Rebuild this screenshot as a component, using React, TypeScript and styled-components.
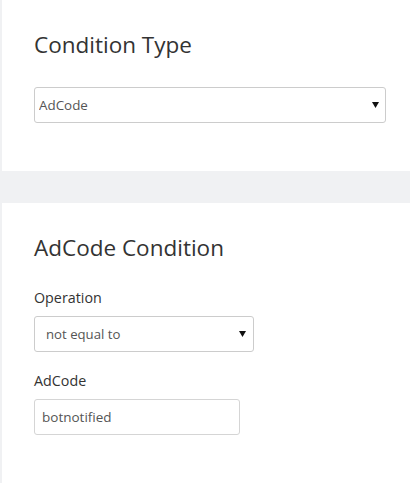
import React from "react";
import styled, { createGlobalStyle } from "styled-components";

const Global = createGlobalStyle`
  html, body { margin: 0; padding: 0; }
  body {
    background: #f0f1f3;
    font-family: "Open Sans", "Liberation Sans", sans-serif;
    color: #333;
  }
  * { box-sizing: border-box; }
`;

const Page = styled.div`
  display: flex;
  flex-direction: column;
  gap: 32px;
  padding-left: 2px;
  min-height: 483px;
`;

const Panel = styled.section<{ $grow?: boolean }>`
  background: #fff;
  padding: 30px 22px 48px 32px;
  display: flex;
  flex-direction: column;
  align-items: flex-start;
  flex: ${(p) => (p.$grow ? "1" : "none")};
`;

const Heading = styled.h2<{ $gap?: number }>`
  margin: 0 0 ${(p) => p.$gap ?? 27}px;
  font-size: 22.5px;
  line-height: 30px;
  font-weight: 400;
  color: #333;
`;

const Field = styled.div<{ $gap?: number }>`
  display: flex;
  flex-direction: column;
  gap: 8px;
  margin-top: ${(p) => p.$gap ?? 0}px;
`;

const Label = styled.label`
  font-size: 14.3px;
  line-height: 20px;
  color: #333;
`;

const SelectWrap = styled.div<{ $width: number }>`
  position: relative;
  width: ${(p) => p.$width}px;
  height: 36px;
`;

const Select = styled.select<{ $pad: number; $size: number }>`
  appearance: none;
  -webkit-appearance: none;
  width: 100%;
  height: 36px;
  margin: 0;
  border: 1px solid #cccccc;
  border-radius: 3px;
  background: #fff;
  padding: 0 24px 0 ${(p) => p.$pad}px;
  font-family: "Open Sans", "Liberation Sans", sans-serif;
  font-size: ${(p) => p.$size}px;
  color: #555;
  outline: none;
`;

const Arrow = styled.svg<{ $right: number }>`
  position: absolute;
  right: ${(p) => p.$right}px;
  top: 50%;
  margin-top: -3px;
  width: 7px;
  height: 6px;
  pointer-events: none;
`;

const TextInput = styled.input<{ $width: number }>`
  width: ${(p) => p.$width}px;
  height: 36px;
  margin: 0;
  border: 1px solid #d5d5d5;
  border-radius: 3px;
  background: #fff;
  padding: 0 7px;
  font-family: "Open Sans", "Liberation Sans", sans-serif;
  font-size: 13.5px;
  color: #555;
  outline: none;
`;

const Caret = ({ right }: { right: number }) => (
  <Arrow $right={right} viewBox="0 0 7 6">
    <polygon points="0,0 7,0 3.5,6" fill="#111" />
  </Arrow>
);

export default function App() {
  return (
    <>
      <Global />
      <Page>
        <Panel>
          <Heading>Condition Type</Heading>
          <SelectWrap $width={352}>
            <Select $pad={4} $size={13.4} defaultValue="AdCode">
              <option>AdCode</option>
            </Select>
            <Caret right={7} />
          </SelectWrap>
        </Panel>
        <Panel $grow>
          <Heading $gap={25}>AdCode Condition</Heading>
          <Field>
            <Label>Operation</Label>
            <SelectWrap $width={220}>
              <Select $pad={11} $size={13.2} defaultValue="not equal to">
                <option>not equal to</option>
              </Select>
              <Caret right={8} />
            </SelectWrap>
          </Field>
          <Field $gap={19}>
            <Label>AdCode</Label>
            <TextInput $width={206} defaultValue="botnotified" />
          </Field>
        </Panel>
      </Page>
    </>
  );
}
